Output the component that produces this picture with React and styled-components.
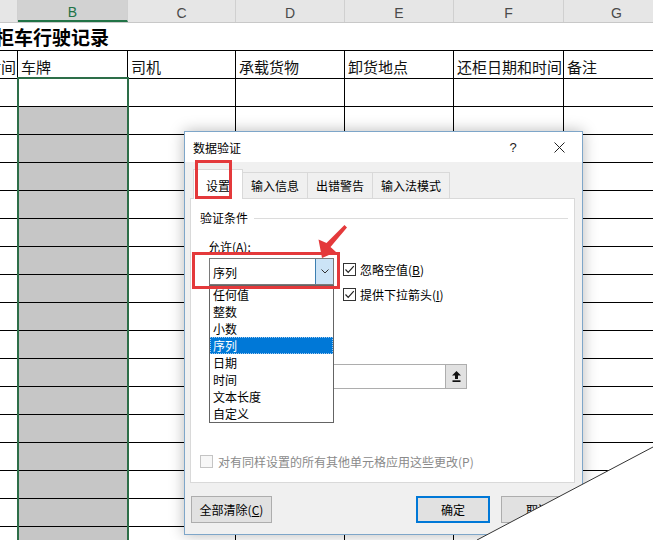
import React from 'react';
import styled, { createGlobalStyle, css } from 'styled-components';

const GlobalStyle = createGlobalStyle`
  html, body { margin: 0; padding: 0; background: #fff; overflow: hidden; }
  body { font-family: "Noto Sans CJK SC", "Noto Sans", sans-serif; }
  * { box-sizing: border-box; }
`;

const COLS = '18px 110px 108px 109px 109px 110px 106px';
const CJK = '"Noto Sans CJK SC", "Noto Sans", sans-serif';

const Page = styled.div`
  position: relative;
  width: 653px;
  height: 540px;
  overflow: hidden;
  background: #fff;
`;

const Sheet = styled.div`
  display: flex;
  flex-direction: column;
  width: 670px;
`;

const ColHeaderRow = styled.div`
  display: grid;
  grid-template-columns: ${COLS};
  height: 23px;
  background: #e6e6e6;
  border-bottom: 1px solid #c8c8c8;
`;

const ColLetter = styled.div`
  display: flex;
  justify-content: center;
  align-items: center;
  padding-top: 3px;
  font-family: "Liberation Sans", Arial, sans-serif;
  font-size: 14px;
  color: #4a4a4a;
  border-right: 1px solid #d0d0d0;
  ${(p) =>
    p.$active &&
    css`
      background: #d2d2d2;
      color: #217346;
      border-bottom: 2px solid #217346;
    `}
`;

const TitleRow = styled.div`
  height: 28px;
  border-bottom: 1px solid #000;
  display: flex;
  align-items: flex-end;
  overflow: hidden;
  padding-bottom: 1px;
`;

const Title = styled.div`
  font-family: ${CJK};
  font-size: 19px;
  font-weight: bold;
  line-height: 24px;
  margin-left: -5px;
  white-space: nowrap;
  color: #000;
`;

const Row = styled.div`
  display: grid;
  grid-template-columns: ${COLS};
  height: 28px;
`;

const Cell = styled.div`
  display: flex;
  align-items: flex-end;
  padding: 0 0 1px 3px;
  border-right: 1px solid #000;
  border-bottom: 1px solid #000;
  font-family: ${CJK};
  font-size: 15px;
  line-height: 20px;
  color: #111;
  white-space: nowrap;
  overflow: hidden;
  ${(p) => p.$shade && css`background: #c6c6c6;`}
  ${(p) =>
    p.$right &&
    css`
      justify-content: flex-end;
      padding: 0 1px 1px 0;
    `}
`;

const SelectionFrame = styled.div`
  position: absolute;
  left: 17px;
  top: 77px;
  width: 112px;
  height: 480px;
  border: 2px solid #2d6e48;
  pointer-events: none;
`;

/* ---------- dialog ---------- */

const Dialog = styled.div`
  position: absolute;
  left: 184px;
  top: 131px;
  z-index: 2;
  width: 399px;
  height: 404px;
  background: #f0f0f0;
  border: 1px solid #7ea6c9;
  box-shadow: 0 0 14px rgba(0, 0, 0, 0.28);
  display: flex;
  flex-direction: column;
  font-family: ${CJK};
  font-size: 12px;
  color: #000;
`;

const TitleBar = styled.div`
  height: 30px;
  background: #fff;
  display: flex;
  align-items: center;
  padding-left: 8px;
`;

const TitleText = styled.div`
  font-size: 12px;
  line-height: 17px;
  padding-top: 1px;
`;

const TitleActions = styled.div`
  margin-left: auto;
  display: flex;
  height: 100%;
`;

const TitleButton = styled.div`
  width: 46px;
  height: 100%;
  display: flex;
  align-items: center;
  justify-content: center;
  font-family: "Liberation Sans", Arial, sans-serif;
  font-size: 13px;
  color: #222;
`;

const Body = styled.div`
  display: flex;
  flex-direction: column;
  padding: 0 7px 0 5px;
`;

const TabStrip = styled.div`
  display: flex;
  align-items: flex-end;
  height: 36px;
  padding-left: 3px;
`;

const Tab = styled.div`
  height: 26px;
  padding: 0 8px;
  margin-left: -1px;
  border: 1px solid #d9d9d9;
  border-bottom: none;
  display: flex;
  align-items: center;
  background: #f0f0f0;
  line-height: 17px;
  white-space: nowrap;
  ${(p) =>
    p.$active &&
    css`
      height: 30px;
      margin-left: 0;
      margin-bottom: -1px;
      padding: 2px 12px 0;
      background: #fff;
      position: relative;
      z-index: 1;
    `}
`;

const Panel = styled.div`
  position: relative;
  height: 285px;
  background: #fff;
  border: 1px solid #d9d9d9;
  display: flex;
  flex-direction: column;
`;

const GroupHeader = styled.div`
  display: flex;
  align-items: center;
  margin-top: 10px;
  padding: 0 6px 0 9px;
  height: 17px;
  line-height: 17px;
`;

const Rule = styled.div`
  flex: 1;
  height: 1px;
  margin-left: 6px;
  margin-top: 1px;
  background: #dcdcdc;
`;

const FieldLabel = styled.div`
  margin: 12px 0 0 17px;
  height: 17px;
  line-height: 17px;
`;

const AllowRow = styled.div`
  display: flex;
  align-items: flex-start;
  margin: 3px 0 0 18px;
`;

const Combo = styled.div`
  width: 125px;
  height: 27px;
  border: 1px solid #7a7a7a;
  display: flex;
  align-items: stretch;
  background: #fff;
`;

const ComboValue = styled.div`
  flex: 1;
  display: flex;
  align-items: center;
  padding-left: 3px;
  padding-top: 1px;
`;

const ComboButton = styled.div`
  width: 18px;
  background: #cce4f7;
  border-left: 1px solid #3c7fb1;
  display: flex;
  align-items: center;
  justify-content: center;
`;

const Checks = styled.div`
  display: flex;
  flex-direction: column;
  gap: 8px;
  margin: 3px 0 0 9px;
`;

const CheckRow = styled.div`
  display: flex;
  align-items: center;
  gap: 4px;
  height: 17px;
  line-height: 17px;
  white-space: nowrap;
  color: ${(p) => (p.$disabled ? '#8a8a8a' : '#000')};
`;

const Box = styled.div`
  width: 13px;
  height: 13px;
  border: 1px solid ${(p) => (p.$disabled ? '#c4c4c4' : '#333')};
  background: ${(p) => (p.$disabled ? '#f7f7f7' : '#fff')};
  display: flex;
  align-items: center;
  justify-content: center;
  flex: none;
`;

const SourceRow = styled.div`
  display: flex;
  margin: 61px 0 0 18px;
  height: 25px;
`;

const SourceInput = styled.div`
  width: 237px;
  height: 25px;
  border: 1px solid #adadad;
  background: #fff;
`;

const PickButton = styled.div`
  width: 22px;
  height: 25px;
  margin-left: -1px;
  background: #e1e1e1;
  border: 1px solid #adadad;
  display: flex;
  align-items: center;
  justify-content: center;
`;

const ApplyAll = styled(CheckRow)`
  margin: 64px 0 0 9px;
  gap: 5px;
`;

const DropList = styled.div`
  position: absolute;
  left: 18px;
  top: 86px;
  width: 125px;
  height: 138px;
  background: #fff;
  border: 1px solid #646464;
  display: flex;
  flex-direction: column;
`;

const DropItem = styled.div`
  height: 17px;
  line-height: 17px;
  padding-left: 3px;
  white-space: nowrap;
  ${(p) =>
    p.$selected &&
    css`
      background: #0078d7;
      color: #fff;
      outline: 1px dotted #9fc9ee;
      outline-offset: -1px;
    `}
`;

const ButtonRow = styled.div`
  display: flex;
  justify-content: space-between;
  align-items: center;
  margin-top: 13px;
  padding-left: 1px;
`;

const ButtonGroup = styled.div`
  display: flex;
  gap: 11px;
`;

const DlgButton = styled.div`
  width: ${(p) => p.$w || 74}px;
  height: 27px;
  background: #e1e1e1;
  border: 1px solid #adadad;
  display: flex;
  align-items: center;
  justify-content: center;
  line-height: 17px;
  ${(p) =>
    p.$default &&
    css`
      border-color: #0078d7;
      box-shadow: inset 0 0 0 1px #0078d7;
    `}
`;

/* ---------- overlays ---------- */

const RedBox = styled.div`
  position: absolute;
  z-index: 5;
  border: 3px solid #e4393b;
  pointer-events: none;
`;

const OverlaySvg = styled.svg`
  position: absolute;
  left: 0;
  top: 0;
  z-index: 6;
  pointer-events: none;
`;

const colLetters = ['', 'B', 'C', 'D', 'E', 'F', 'G'];
const headers = ['时间', '车牌', '司机', '承载货物', '卸货地点', '还柜日期和时间', '备注'];
const listItems = ['任何值', '整数', '小数', '序列', '日期', '时间', '文本长度', '自定义'];

function Check() {
  return (
    <svg width="11" height="11" viewBox="0 0 11 11">
      <polyline points="1.5,5.5 4.2,8.3 9.8,2.2" fill="none" stroke="#222" strokeWidth="1.2" />
    </svg>
  );
}

export default function App() {
  const bodyRows = Array.from({ length: 17 }, (_, i) => i);
  return (
    <Page>
      <GlobalStyle />
      <Sheet>
        <ColHeaderRow>
          {colLetters.map((l, i) => (
            <ColLetter key={i} $active={l === 'B'}>
              {l}
            </ColLetter>
          ))}
        </ColHeaderRow>
        <TitleRow>
          <Title>柜车行驶记录</Title>
        </TitleRow>
        <Row>
          {headers.map((h, i) => (
            <Cell key={i} $right={i === 0}>
              {h}
            </Cell>
          ))}
        </Row>
        {bodyRows.map((r) => (
          <Row key={r}>
            {colLetters.map((_, c) => (
              <Cell key={c} $shade={c === 1 && r > 0} />
            ))}
          </Row>
        ))}
      </Sheet>
      <SelectionFrame />

      <Dialog>
        <TitleBar>
          <TitleText>数据验证</TitleText>
          <TitleActions>
            <TitleButton>?</TitleButton>
            <TitleButton>
              <svg width="11" height="11" viewBox="0 0 11 11">
                <path d="M0.5 0.5 L10.5 10.5 M10.5 0.5 L0.5 10.5" stroke="#222" strokeWidth="1" />
              </svg>
            </TitleButton>
          </TitleActions>
        </TitleBar>
        <Body>
          <TabStrip>
            <Tab $active>设置</Tab>
            <Tab>输入信息</Tab>
            <Tab>出错警告</Tab>
            <Tab>输入法模式</Tab>
          </TabStrip>
          <Panel>
            <GroupHeader>
              <span>验证条件</span>
              <Rule />
            </GroupHeader>
            <FieldLabel>
              允许(<u>A</u>):
            </FieldLabel>
            <AllowRow>
              <Combo>
                <ComboValue>序列</ComboValue>
                <ComboButton>
                  <svg width="8" height="5" viewBox="0 0 8 5">
                    <polyline points="0.5,0.5 4,4 7.5,0.5" fill="none" stroke="#333" strokeWidth="1" />
                  </svg>
                </ComboButton>
              </Combo>
              <Checks>
                <CheckRow>
                  <Box>
                    <Check />
                  </Box>
                  <span>
                    忽略空值(<u>B</u>)
                  </span>
                </CheckRow>
                <CheckRow>
                  <Box>
                    <Check />
                  </Box>
                  <span>
                    提供下拉箭头(<u>I</u>)
                  </span>
                </CheckRow>
              </Checks>
            </AllowRow>
            <SourceRow>
              <SourceInput />
              <PickButton>
                <svg width="9" height="11" viewBox="0 0 9 11">
                  <polygon points="4.5,0 9,4.5 6,4.5 6,8 3,8 3,4.5 0,4.5" fill="#111" />
                  <rect x="0.5" y="9.3" width="8" height="1.7" fill="#111" />
                </svg>
              </PickButton>
            </SourceRow>
            <ApplyAll $disabled>
              <Box $disabled />
              <span>对有同样设置的所有其他单元格应用这些更改(P)</span>
            </ApplyAll>
            <DropList>
              {listItems.map((it) => (
                <DropItem key={it} $selected={it === '序列'}>
                  {it}
                </DropItem>
              ))}
            </DropList>
          </Panel>
          <ButtonRow>
            <DlgButton $w={81}>
              <span>
                全部清除(<u>C</u>)
              </span>
            </DlgButton>
            <ButtonGroup>
              <DlgButton $default>确定</DlgButton>
              <DlgButton>取消</DlgButton>
            </ButtonGroup>
          </ButtonRow>
        </Body>
      </Dialog>

      <RedBox style={{ left: 195, top: 160, width: 37, height: 39 }} />
      <RedBox style={{ left: 192, top: 252, width: 148, height: 37 }} />

      <OverlaySvg width="653" height="540" viewBox="0 0 653 540">
        <polygon
          points="322,258 318.5,239.5 326.5,243 344.5,225 347,227.5 330.5,247 336,252"
          fill="#e4393b"
        />
        <polygon points="477,540 653,447 653,540" fill="#fff" />
        <line x1="477" y1="540" x2="653" y2="447" stroke="#333" strokeWidth="1" />
      </OverlaySvg>
    </Page>
  );
}
